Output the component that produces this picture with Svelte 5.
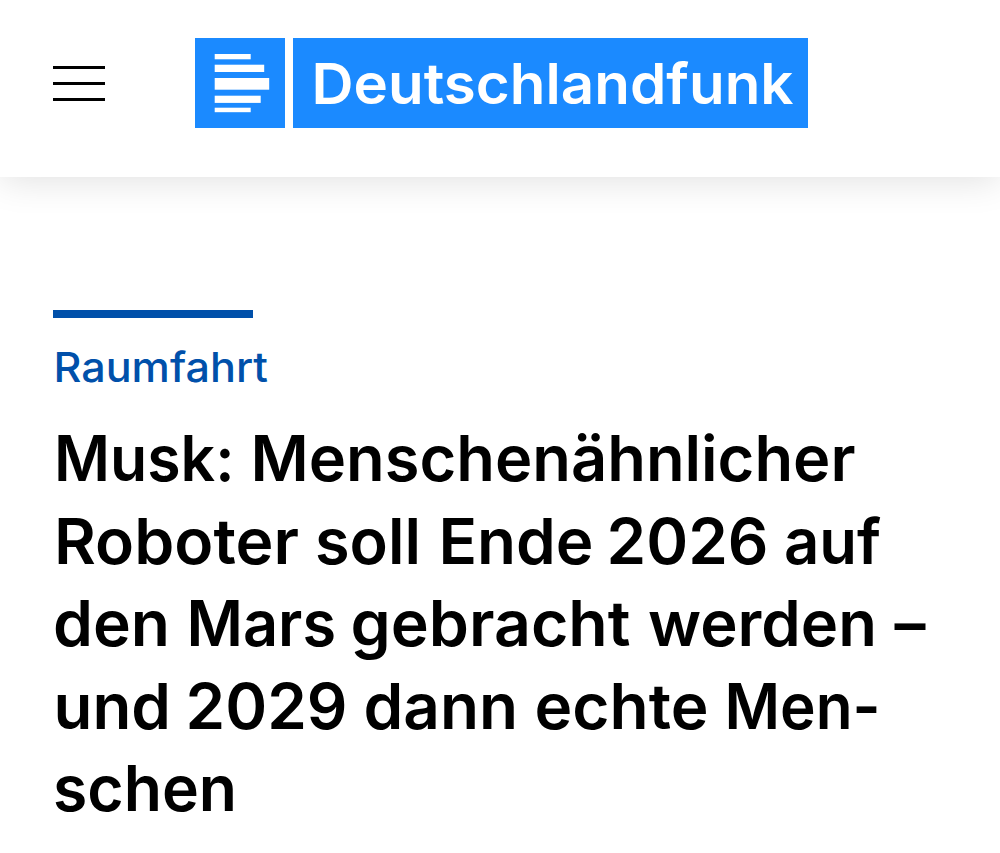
<script>
    const section = "Raumfahrt";

    // Headline lines, each word with its start and the width it should fill
    const headline = [
        [
            { text: "Musk:", x: 1, width: 180.5 },
            { text: "Menschenähnlicher", x: 197.5, width: 605 },
        ],
        [
            { text: "Roboter", x: 1, width: 245 },
            { text: "soll", x: 262, width: 106 },
            { text: "Ende", x: 385.5, width: 155 },
            { text: "2026", x: 553.5, width: 162 },
            { text: "auf", x: 731, width: 97 },
        ],
        [
            { text: "den", x: 0, width: 117 },
            { text: "Mars", x: 133.5, width: 149.5 },
            { text: "gebracht", x: 297.5, width: 280 },
            { text: "werden", x: 595, width: 229 },
            { text: "–", x: 841.5, width: 31 },
        ],
        [
            { text: "und", x: 0.5, width: 117.5 },
            { text: "2029", x: 132.5, width: 162 },
            { text: "dann", x: 310.5, width: 154.5 },
            { text: "echte", x: 481.5, width: 174 },
            { text: "Men-", x: 671.5, width: 156 },
        ],
        [{ text: "schen", x: 0, width: 184 }],
    ];

    // Bars of the logo, from top to bottom
    const bars = [
        { y: 16, width: 36, height: 5.3 },
        { y: 26.7, width: 49.5, height: 7.3 },
        { y: 40, width: 54.5, height: 11.7 },
        { y: 57.7, width: 46, height: 7.2 },
        { y: 69.7, width: 36, height: 4.5 },
    ];
</script>

<header>
    <button class="menu" aria-label="Menü">
        <span></span>
        <span></span>
        <span></span>
    </button>
    <a class="logo" href="/" aria-label="Deutschlandfunk">
        <svg width="90.3" height="90.3">
            {#each bars as bar}
                <rect x="19.7" y={bar.y} width={bar.width} height={bar.height} />
            {/each}
        </svg>
        <svg class="wordmark" width="515" height="90.3">
            <text x="18.5" y="66" textLength="482" lengthAdjust="spacingAndGlyphs">Deutschlandfunk</text>
        </svg>
    </a>
</header>

<main>
    <div class="rule"></div>
    <svg class="section" width="240" height="60">
        <text x="0.5" y="42" textLength="214.5" lengthAdjust="spacingAndGlyphs">{section}</text>
    </svg>
    <h1>
        {#each headline as words}
            <svg width="920" height="82.5">
                {#each words as word}
                    <text x={word.x} y="63" textLength={word.width} lengthAdjust="spacingAndGlyphs">{word.text}</text>
                {/each}
            </svg>
        {/each}
    </h1>
</main>

<style>
    :global(body) {
        background: #fff;
        font-family: Inter, "Liberation Sans", sans-serif;
        overflow: hidden;
    }

    header {
        box-sizing: border-box;
        display: flex;
        align-items: flex-start;
        height: 177px;
        padding: 38px 53px 0;
        background: #fff;
        box-shadow: 0 4px 34px rgba(0, 0, 0, 0.12);
    }

    .menu {
        display: flex;
        flex-direction: column;
        gap: 13px;
        width: 52px;
        margin: 28px 89.7px 0 0;
        padding: 0;
        border: 0;
        background: none;
    }

    .menu span {
        height: 3px;
        background: #000;
    }

    .logo {
        display: flex;
        gap: 8px;
    }

    .logo svg {
        display: block;
        background: #1b8aff;
        fill: #fff;
    }

    .wordmark {
        font-size: 56.5px;
        font-weight: 560;
    }

    main {
        padding: 133px 53px 0;
    }

    .rule {
        width: 200px;
        height: 8px;
        background: #0050aa;
    }

    .section {
        display: block;
        margin-top: 22px;
        fill: #0050aa;
        font-size: 41px;
        font-weight: 550;
    }

    h1 {
        margin: 18px 0 0;
        font-size: 63px;
        font-weight: 580;
    }

    h1 svg {
        display: block;
        overflow: visible;
    }
</style>
